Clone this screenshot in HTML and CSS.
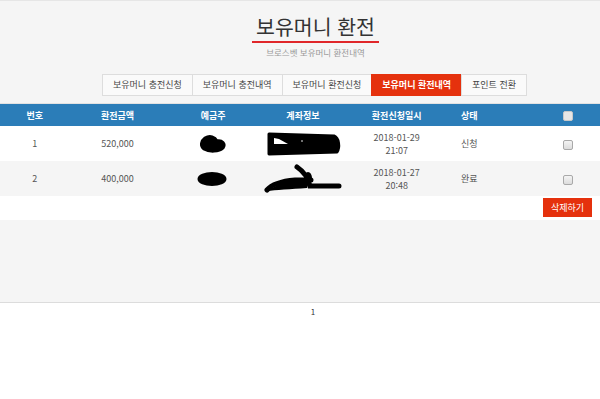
FILE: index.html
```html
<!DOCTYPE html>
<html lang="ko">
<head>
    <meta charset="UTF-8">
    <meta name="viewport" content="width=device-width, initial-scale=1.0">
    <title>보유머니 환전</title>
    <link rel="stylesheet" href="styles.css">
</head>
<body>
    <div class="content">
        <div class="page-head">
            <h1><span>보유머니 환전</span></h1>
            <p class="sub">브로스벳 보유머니 환전내역</p>
        </div>

        <ul class="tabs">
            <li>보유머니 충전신청</li>
            <li>보유머니 충전내역</li>
            <li>보유머니 환전신청</li>
            <li class="active">보유머니 환전내역</li>
            <li>포인트 전환</li>
        </ul>

        <table class="list">
            <thead>
                <tr>
                    <th class="c-no">번호</th>
                    <th class="c-amount">환전금액</th>
                    <th class="c-owner">예금주</th>
                    <th class="c-account">계좌정보</th>
                    <th class="c-date">환전신청일시</th>
                    <th class="c-state">상태</th>
                    <th class="c-check"><input type="checkbox"></th>
                </tr>
            </thead>
            <tbody>
                <tr>
                    <td>1</td>
                    <td>520,000</td>
                    <td>
                        <svg class="mask" width="34" height="22" viewBox="0 0 34 22">
                            <path d="M9 5 C14 2 19 4 21 8 C26 7 30 11 27 15 C23 19 13 19 8 16 C4 13 5 8 9 5 Z" fill="#000" stroke="#000" stroke-width="3"/>
                        </svg>
                    </td>
                    <td>
                        <svg class="mask" width="78" height="26" viewBox="0 0 78 26">
                            <path d="M5 3 L70 5 C75 7 76 16 73 21 L5 23 Z" fill="#000" stroke="#000" stroke-width="3" stroke-linejoin="round"/>
                            <path d="M10 7 L10 13 L24 13 L15 8 Z" fill="#fff"/>
                            <circle cx="38" cy="10" r="0.8" fill="#fff"/>
                        </svg>
                    </td>
                    <td>2018-01-29<br>21:07</td>
                    <td>신청</td>
                    <td class="c-check"><input type="checkbox"></td>
                </tr>
                <tr>
                    <td>2</td>
                    <td>400,000</td>
                    <td>
                        <svg class="mask" width="34" height="20" viewBox="0 0 34 20">
                            <ellipse cx="16" cy="10" rx="13" ry="5.5" fill="#000" stroke="#000" stroke-width="3"/>
                        </svg>
                    </td>
                    <td>
                        <svg class="mask" width="84" height="30" viewBox="0 0 84 30">
                            <path d="M6 26 C12 19 22 17 34 16 L50 16 M36 3 C42 7 47 13 49 22 L78 22" fill="none" stroke="#000" stroke-width="5" stroke-linecap="round"/>
                            <path d="M6 27 C14 26 30 25 46 24 L48 18 L22 18 Z" fill="#000"/>
                            <ellipse cx="47" cy="14" rx="4" ry="6" fill="#000"/>
                        </svg>
                    </td>
                    <td>2018-01-27<br>20:48</td>
                    <td>완료</td>
                    <td class="c-check"><input type="checkbox"></td>
                </tr>
            </tbody>
        </table>

        <div class="actions">
            <button class="btn-delete">삭제하기</button>
        </div>
    </div>

    <div class="pager">1</div>
</body>
</html>
```

FILE: styles.css
```css
body {
    font-family: 'Noto Sans CJK KR', 'Noto Sans', sans-serif;
    background-color: #fff;
    color: #333;
    margin: 0;
    padding: 0;
}

.content {
    background-color: #f5f5f5;
    border-top: 1px solid #e6e6e6;
    border-bottom: 1px solid #dcdcdc;
    min-height: 301px;
}

.page-head {
    text-align: center;
    padding: 11px 0 0 31px;
}

.page-head h1 {
    margin: 0;
    font-size: 20.5px;
    font-weight: 400;
    line-height: 28px;
    color: #333;
}

.page-head h1 span {
    display: inline-block;
    padding: 0 4px 1px;
    border-bottom: 2px solid #e0272a;
}

.sub {
    margin: 3px 0 0;
    font-size: 8.5px;
    line-height: 12px;
    color: #999;
}

.tabs {
    list-style: none;
    margin: 16px 0 0;
    padding: 0 0 0 30px;
    display: flex;
    justify-content: center;
}

.tabs li {
    height: 20px;
    line-height: 20px;
    padding: 0 10px;
    font-size: 9px;
    color: #444;
    background-color: #fafafa;
    border: 1px solid #ddd;
    margin-left: -1px;
}

.tabs li.active {
    background-color: #e5310d;
    border-color: #e5310d;
    color: #fff;
    font-weight: 700;
}

.list {
    width: 100%;
    margin-top: 7px;
    border-collapse: collapse;
    border-top: 1px solid #e2e2e2;
    font-size: 9px;
    color: #555;
}

.list th {
    background-color: #2b7db8;
    color: #fff;
    font-weight: 700;
    height: 22px;
    padding: 0;
    text-align: center;
}

.list td {
    height: 35px;
    padding: 0;
    text-align: center;
    line-height: 13px;
    background-color: #fff;
}

.list tbody tr:nth-child(2) td {
    background-color: #f5f5f5;
}

.c-no { width: 70px; }
.c-amount { width: 96px; }
.c-owner { width: 96px; }
.c-account { width: 82px; }
.c-date { width: 104px; }
.c-state { width: 42px; }

.list .c-check {
    width: 64px;
    padding-left: 46px;
}

.list input[type="checkbox"] {
    -webkit-appearance: none;
    appearance: none;
    display: inline-block;
    box-sizing: border-box;
    width: 10px;
    height: 10px;
    margin: 0;
    vertical-align: middle;
    border: 1px solid #a9a9a9;
    border-radius: 2px;
    background: linear-gradient(#f4f4f4, #dcdcdc);
}

.list th input[type="checkbox"] {
    border-color: #c8c8c8;
    background: #e6e6e6;
}

.mask {
    display: block;
    margin: 0 auto;
}

.actions {
    background-color: #fff;
    display: flex;
    justify-content: flex-end;
    padding: 2px 8px 3px 0;
}

.btn-delete {
    display: block;
    background-color: #e5310d;
    color: #fff;
    border: none;
    font-family: inherit;
    font-size: 9px;
    height: 19px;
    width: 49px;
    padding: 0;
    cursor: pointer;
}

.pager {
    text-align: center;
    font-size: 8px;
    line-height: 12px;
    padding-top: 3px;
    padding-left: 26px;
    color: #333;
}
```
